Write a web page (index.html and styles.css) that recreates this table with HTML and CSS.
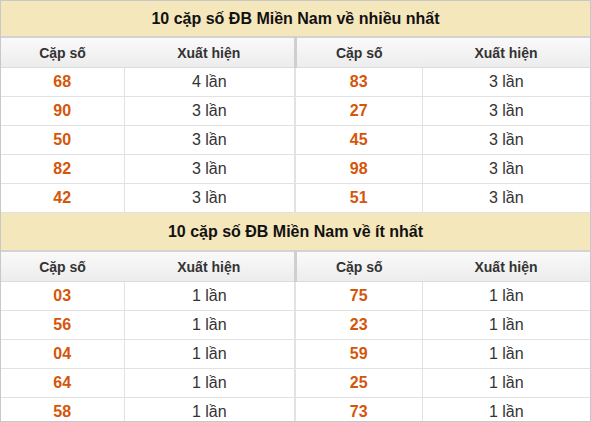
FILE: index.html
```html
<!DOCTYPE html>
<html lang="vi">
<head>
<meta charset="utf-8">
<link rel="stylesheet" href="styles.css">
</head>
<body>
<div class="wrap">
  <table class="stat">
    <colgroup><col class="c1"><col class="c2"><col class="c3"><col class="c4"></colgroup>
    <tr><th class="title" colspan="4">10 cặp số ĐB Miền Nam về nhiều nhất</th></tr>
    <tr class="head"><th>Cặp số</th><th class="split">Xuất hiện</th><th>Cặp số</th><th>Xuất hiện</th></tr>
    <tr><td class="num">68</td><td class="split">4 lần</td><td class="num">83</td><td>3 lần</td></tr>
    <tr><td class="num">90</td><td class="split">3 lần</td><td class="num">27</td><td>3 lần</td></tr>
    <tr><td class="num">50</td><td class="split">3 lần</td><td class="num">45</td><td>3 lần</td></tr>
    <tr><td class="num">82</td><td class="split">3 lần</td><td class="num">98</td><td>3 lần</td></tr>
    <tr><td class="num">42</td><td class="split">3 lần</td><td class="num">51</td><td>3 lần</td></tr>
    <tr><th class="title title2" colspan="4">10 cặp số ĐB Miền Nam về ít nhất</th></tr>
    <tr class="head"><th>Cặp số</th><th class="split">Xuất hiện</th><th>Cặp số</th><th>Xuất hiện</th></tr>
    <tr><td class="num">03</td><td class="split">1 lần</td><td class="num">75</td><td>1 lần</td></tr>
    <tr><td class="num">56</td><td class="split">1 lần</td><td class="num">23</td><td>1 lần</td></tr>
    <tr><td class="num">04</td><td class="split">1 lần</td><td class="num">59</td><td>1 lần</td></tr>
    <tr><td class="num">64</td><td class="split">1 lần</td><td class="num">25</td><td>1 lần</td></tr>
    <tr><td class="num">58</td><td class="split">1 lần</td><td class="num">73</td><td>1 lần</td></tr>
  </table>
</div>
</body>
</html>
```
FILE: styles.css
```css
html, body {
  margin: 0;
  padding: 0;
  background: #fff;
}
.wrap {
  width: 591px;
  height: 422px;
  box-sizing: border-box;
  border: 1px solid #c8c8c8;
  overflow: hidden;
}
.stat {
  width: 100%;
  border-collapse: collapse;
  table-layout: fixed;
  font-family: "Liberation Sans", Arial, sans-serif;
  color: #333;
}
.c1 { width: 123px; }
.c2 { width: 171px; }
.c3 { width: 127px; }
.stat th, .stat td {
  text-align: center;
  padding: 0;
}
.title {
  height: 35px;
  background: #f5e7bc;
  font-size: 16px;
  font-weight: bold;
  color: #111;
  border-bottom: 2px solid #d3d3d3;
}
.title2 {
  height: 37px;
}
.head th {
  height: 29px;
  font-size: 14px;
  font-weight: bold;
  color: #333;
  background: linear-gradient(#fafafa, #ececec);
  border-bottom: 1px solid #dcdcdc;
}
.head th.split {
  border-right: 3px solid #cfcfcf;
}
.stat td {
  height: 28px;
  font-size: 16px;
  border-bottom: 1px solid #e2e2e2;
  border-right: 1px solid #e2e2e2;
}
.stat td:last-child { border-right: 0; }
.stat td.split {
  border-right: 2px solid #e2e2e2;
}
.num {
  color: #d5560a;
  font-weight: bold;
}
```
